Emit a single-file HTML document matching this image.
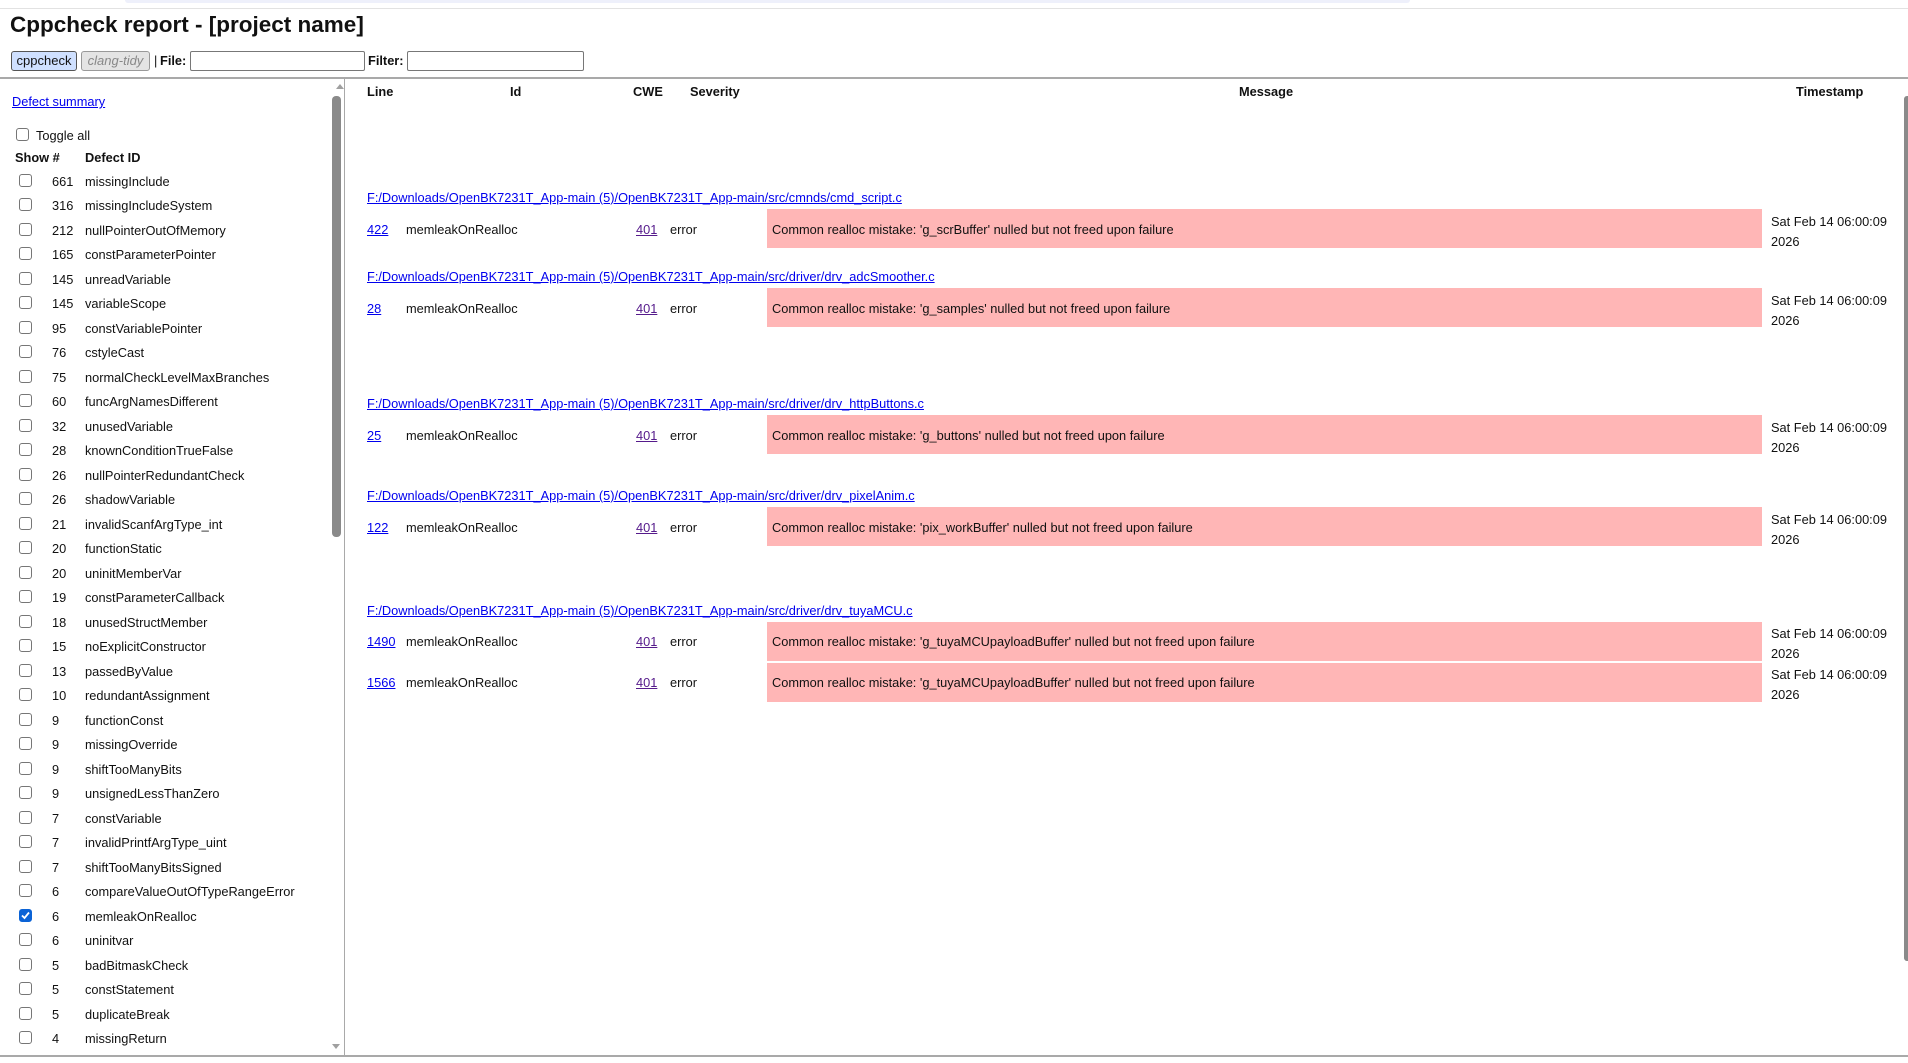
<!DOCTYPE html>
<html><head><meta charset="utf-8"><style>
*{margin:0;padding:0;box-sizing:border-box}
body{width:1908px;height:1063px;overflow:hidden;background:#fff;font-family:"Liberation Sans",sans-serif;font-size:12.8px;color:#111;position:relative}
.a{position:absolute;white-space:nowrap}
.cb{position:absolute;width:13px;height:13px;border:1px solid #767676;border-radius:3px;background:#fff}
.cb.on{background:#0b63d6;border-color:#0b63d6}
.b{font-weight:bold}
a,.lk{color:#0000ee;text-decoration:underline}
.vis{color:#551a8b;text-decoration:underline}
.pink{position:absolute;background:#ffb6b6;left:767px;width:995px}
</style></head><body>
<div class="a" style="left:125px;top:0;width:1285px;height:3px;background:#eef0fb;border-radius:0 0 4px 4px"></div>
<div class="a" style="left:0;top:8px;width:1908px;height:1px;background:#e2e2e2"></div>
<div class="a b" style="left:10px;top:12px;font-size:22.5px">Cppcheck report - [project name]</div>
<div class="a" style="left:11px;top:51px;width:66px;height:20px;background:#cfe0ff;border:1px solid #555;border-radius:3px;font-size:13px;text-align:center;line-height:18px">cppcheck</div>
<div class="a" style="left:81px;top:51px;width:69px;height:20px;background:#e4e4e4;border:1px solid #999;border-radius:3px;font-size:13px;text-align:center;line-height:18px;color:#888;font-style:italic">clang-tidy</div>
<div class="a" style="left:154px;top:53px">|</div>
<div class="a b" style="left:160px;top:53px">File:</div>
<div class="a" style="left:190px;top:51px;width:175px;height:20px;border:1px solid #777;border-radius:2px"></div>
<div class="a b" style="left:368px;top:53px">Filter:</div>
<div class="a" style="left:407px;top:51px;width:177px;height:20px;border:1px solid #777;border-radius:2px"></div>
<div class="a" style="left:0;top:77px;width:1908px;height:2px;background:#a9a9a9"></div>
<div class="a" style="left:0;top:1055px;width:1908px;height:2px;background:#a9a9a9"></div>
<div class="a" style="left:344px;top:79px;width:1px;height:976px;background:#a9a9a9"></div>
<div class="a" style="left:336px;top:84px;width:0;height:0;border-left:4px solid transparent;border-right:4px solid transparent;border-bottom:5px solid #a0a0a0"></div>
<div class="a" style="left:332px;top:96px;width:9px;height:441px;background:#8a8a8a;border-radius:4px"></div>
<div class="a" style="left:332px;top:1044px;width:0;height:0;border-left:4px solid transparent;border-right:4px solid transparent;border-top:5px solid #a0a0a0"></div>
<div class="a" style="left:1904px;top:96px;width:4px;height:865px;background:#8a8a8a;border-radius:3px 0 0 3px"></div>
<a class="a" style="left:12px;top:94px">Defect summary</a>
<div class="cb" style="left:16px;top:128px"></div>
<div class="a" style="left:36px;top:128px">Toggle all</div>
<div class="a b" style="left:15px;top:150px">Show #</div>
<div class="a b" style="left:85px;top:150px">Defect ID</div>
<div class="a b" style="left:367px;top:84px">Line</div>
<div class="a b" style="left:510px;top:84px">Id</div>
<div class="a b" style="left:633px;top:84px">CWE</div>
<div class="a b" style="left:690px;top:84px">Severity</div>
<div class="a b" style="left:1239px;top:84px">Message</div>
<div class="a b" style="left:1796px;top:84px">Timestamp</div>

<a class="a" style="left:367px;top:190px">F:/Downloads/OpenBK7231T_App-main (5)/OpenBK7231T_App-main/src/cmnds/cmd_script.c</a>
<div class="pink" style="top:209px;height:39px"></div>
<a class="a" style="left:367px;top:222px">422</a><div class="a" style="left:406px;top:222px">memleakOnRealloc</div><span class="a vis" style="left:636px;top:222px">401</span><div class="a" style="left:670px;top:222px">error</div>
<div class="a" style="left:772px;top:222px">Common realloc mistake: 'g_scrBuffer' nulled but not freed upon failure</div>
<div class="a" style="left:1771px;top:212px;line-height:20px">Sat Feb 14 06:00:09<br>2026</div>

<a class="a" style="left:367px;top:269px">F:/Downloads/OpenBK7231T_App-main (5)/OpenBK7231T_App-main/src/driver/drv_adcSmoother.c</a>
<div class="pink" style="top:288px;height:39px"></div>
<a class="a" style="left:367px;top:301px">28</a><div class="a" style="left:406px;top:301px">memleakOnRealloc</div><span class="a vis" style="left:636px;top:301px">401</span><div class="a" style="left:670px;top:301px">error</div>
<div class="a" style="left:772px;top:301px">Common realloc mistake: 'g_samples' nulled but not freed upon failure</div>
<div class="a" style="left:1771px;top:291px;line-height:20px">Sat Feb 14 06:00:09<br>2026</div>

<a class="a" style="left:367px;top:396px">F:/Downloads/OpenBK7231T_App-main (5)/OpenBK7231T_App-main/src/driver/drv_httpButtons.c</a>
<div class="pink" style="top:415px;height:39px"></div>
<a class="a" style="left:367px;top:428px">25</a><div class="a" style="left:406px;top:428px">memleakOnRealloc</div><span class="a vis" style="left:636px;top:428px">401</span><div class="a" style="left:670px;top:428px">error</div>
<div class="a" style="left:772px;top:428px">Common realloc mistake: 'g_buttons' nulled but not freed upon failure</div>
<div class="a" style="left:1771px;top:418px;line-height:20px">Sat Feb 14 06:00:09<br>2026</div>

<a class="a" style="left:367px;top:488px">F:/Downloads/OpenBK7231T_App-main (5)/OpenBK7231T_App-main/src/driver/drv_pixelAnim.c</a>
<div class="pink" style="top:507px;height:39px"></div>
<a class="a" style="left:367px;top:520px">122</a><div class="a" style="left:406px;top:520px">memleakOnRealloc</div><span class="a vis" style="left:636px;top:520px">401</span><div class="a" style="left:670px;top:520px">error</div>
<div class="a" style="left:772px;top:520px">Common realloc mistake: 'pix_workBuffer' nulled but not freed upon failure</div>
<div class="a" style="left:1771px;top:510px;line-height:20px">Sat Feb 14 06:00:09<br>2026</div>

<a class="a" style="left:367px;top:603px">F:/Downloads/OpenBK7231T_App-main (5)/OpenBK7231T_App-main/src/driver/drv_tuyaMCU.c</a>
<div class="pink" style="top:622px;height:39px"></div>
<a class="a" style="left:367px;top:634px">1490</a><div class="a" style="left:406px;top:634px">memleakOnRealloc</div><span class="a vis" style="left:636px;top:634px">401</span><div class="a" style="left:670px;top:634px">error</div>
<div class="a" style="left:772px;top:634px">Common realloc mistake: 'g_tuyaMCUpayloadBuffer' nulled but not freed upon failure</div>
<div class="a" style="left:1771px;top:624px;line-height:20px">Sat Feb 14 06:00:09<br>2026</div>
<div class="pink" style="top:663px;height:39px"></div>
<a class="a" style="left:367px;top:675px">1566</a><div class="a" style="left:406px;top:675px">memleakOnRealloc</div><span class="a vis" style="left:636px;top:675px">401</span><div class="a" style="left:670px;top:675px">error</div>
<div class="a" style="left:772px;top:675px">Common realloc mistake: 'g_tuyaMCUpayloadBuffer' nulled but not freed upon failure</div>
<div class="a" style="left:1771px;top:665px;line-height:20px">Sat Feb 14 06:00:09<br>2026</div>

<div class="cb" style="left:19px;top:174px"></div><div class="a" style="left:52px;top:174px">661</div><div class="a" style="left:85px;top:174px">missingInclude</div>
<div class="cb" style="left:19px;top:198px"></div><div class="a" style="left:52px;top:198px">316</div><div class="a" style="left:85px;top:198px">missingIncludeSystem</div>
<div class="cb" style="left:19px;top:223px"></div><div class="a" style="left:52px;top:223px">212</div><div class="a" style="left:85px;top:223px">nullPointerOutOfMemory</div>
<div class="cb" style="left:19px;top:247px"></div><div class="a" style="left:52px;top:247px">165</div><div class="a" style="left:85px;top:247px">constParameterPointer</div>
<div class="cb" style="left:19px;top:272px"></div><div class="a" style="left:52px;top:272px">145</div><div class="a" style="left:85px;top:272px">unreadVariable</div>
<div class="cb" style="left:19px;top:296px"></div><div class="a" style="left:52px;top:296px">145</div><div class="a" style="left:85px;top:296px">variableScope</div>
<div class="cb" style="left:19px;top:321px"></div><div class="a" style="left:52px;top:321px">95</div><div class="a" style="left:85px;top:321px">constVariablePointer</div>
<div class="cb" style="left:19px;top:345px"></div><div class="a" style="left:52px;top:345px">76</div><div class="a" style="left:85px;top:345px">cstyleCast</div>
<div class="cb" style="left:19px;top:370px"></div><div class="a" style="left:52px;top:370px">75</div><div class="a" style="left:85px;top:370px">normalCheckLevelMaxBranches</div>
<div class="cb" style="left:19px;top:394px"></div><div class="a" style="left:52px;top:394px">60</div><div class="a" style="left:85px;top:394px">funcArgNamesDifferent</div>
<div class="cb" style="left:19px;top:419px"></div><div class="a" style="left:52px;top:419px">32</div><div class="a" style="left:85px;top:419px">unusedVariable</div>
<div class="cb" style="left:19px;top:443px"></div><div class="a" style="left:52px;top:443px">28</div><div class="a" style="left:85px;top:443px">knownConditionTrueFalse</div>
<div class="cb" style="left:19px;top:468px"></div><div class="a" style="left:52px;top:468px">26</div><div class="a" style="left:85px;top:468px">nullPointerRedundantCheck</div>
<div class="cb" style="left:19px;top:492px"></div><div class="a" style="left:52px;top:492px">26</div><div class="a" style="left:85px;top:492px">shadowVariable</div>
<div class="cb" style="left:19px;top:517px"></div><div class="a" style="left:52px;top:517px">21</div><div class="a" style="left:85px;top:517px">invalidScanfArgType_int</div>
<div class="cb" style="left:19px;top:541px"></div><div class="a" style="left:52px;top:541px">20</div><div class="a" style="left:85px;top:541px">functionStatic</div>
<div class="cb" style="left:19px;top:566px"></div><div class="a" style="left:52px;top:566px">20</div><div class="a" style="left:85px;top:566px">uninitMemberVar</div>
<div class="cb" style="left:19px;top:590px"></div><div class="a" style="left:52px;top:590px">19</div><div class="a" style="left:85px;top:590px">constParameterCallback</div>
<div class="cb" style="left:19px;top:615px"></div><div class="a" style="left:52px;top:615px">18</div><div class="a" style="left:85px;top:615px">unusedStructMember</div>
<div class="cb" style="left:19px;top:639px"></div><div class="a" style="left:52px;top:639px">15</div><div class="a" style="left:85px;top:639px">noExplicitConstructor</div>
<div class="cb" style="left:19px;top:664px"></div><div class="a" style="left:52px;top:664px">13</div><div class="a" style="left:85px;top:664px">passedByValue</div>
<div class="cb" style="left:19px;top:688px"></div><div class="a" style="left:52px;top:688px">10</div><div class="a" style="left:85px;top:688px">redundantAssignment</div>
<div class="cb" style="left:19px;top:713px"></div><div class="a" style="left:52px;top:713px">9</div><div class="a" style="left:85px;top:713px">functionConst</div>
<div class="cb" style="left:19px;top:737px"></div><div class="a" style="left:52px;top:737px">9</div><div class="a" style="left:85px;top:737px">missingOverride</div>
<div class="cb" style="left:19px;top:762px"></div><div class="a" style="left:52px;top:762px">9</div><div class="a" style="left:85px;top:762px">shiftTooManyBits</div>
<div class="cb" style="left:19px;top:786px"></div><div class="a" style="left:52px;top:786px">9</div><div class="a" style="left:85px;top:786px">unsignedLessThanZero</div>
<div class="cb" style="left:19px;top:811px"></div><div class="a" style="left:52px;top:811px">7</div><div class="a" style="left:85px;top:811px">constVariable</div>
<div class="cb" style="left:19px;top:835px"></div><div class="a" style="left:52px;top:835px">7</div><div class="a" style="left:85px;top:835px">invalidPrintfArgType_uint</div>
<div class="cb" style="left:19px;top:860px"></div><div class="a" style="left:52px;top:860px">7</div><div class="a" style="left:85px;top:860px">shiftTooManyBitsSigned</div>
<div class="cb" style="left:19px;top:884px"></div><div class="a" style="left:52px;top:884px">6</div><div class="a" style="left:85px;top:884px">compareValueOutOfTypeRangeError</div>
<div class="cb on" style="left:19px;top:909px"><svg width="11" height="11" viewBox="0 0 11 11" style="position:absolute;left:0;top:0"><path d="M2 5.5 L4.5 8 L9 2.5" stroke="#fff" stroke-width="1.8" fill="none"/></svg></div><div class="a" style="left:52px;top:909px">6</div><div class="a" style="left:85px;top:909px">memleakOnRealloc</div>
<div class="cb" style="left:19px;top:933px"></div><div class="a" style="left:52px;top:933px">6</div><div class="a" style="left:85px;top:933px">uninitvar</div>
<div class="cb" style="left:19px;top:958px"></div><div class="a" style="left:52px;top:958px">5</div><div class="a" style="left:85px;top:958px">badBitmaskCheck</div>
<div class="cb" style="left:19px;top:982px"></div><div class="a" style="left:52px;top:982px">5</div><div class="a" style="left:85px;top:982px">constStatement</div>
<div class="cb" style="left:19px;top:1007px"></div><div class="a" style="left:52px;top:1007px">5</div><div class="a" style="left:85px;top:1007px">duplicateBreak</div>
<div class="cb" style="left:19px;top:1031px"></div><div class="a" style="left:52px;top:1031px">4</div><div class="a" style="left:85px;top:1031px">missingReturn</div>
</body></html>
